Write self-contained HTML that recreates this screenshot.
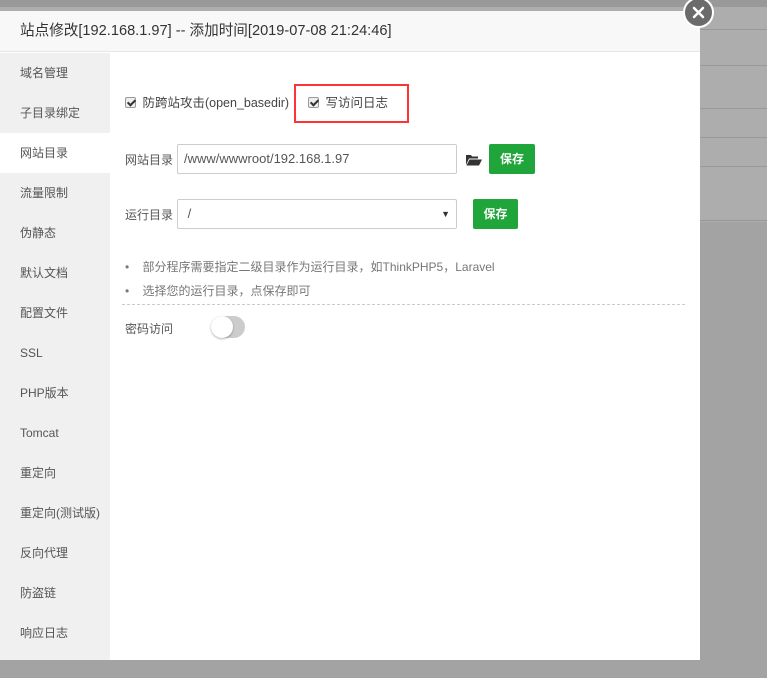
<!DOCTYPE html>
<html><head><meta charset="utf-8"><style>
*{margin:0;padding:0;box-sizing:border-box}
body{width:767px;height:678px;overflow:hidden;background:#a3a3a3;font-family:"Liberation Sans","Noto Sans CJK SC",sans-serif;font-size:12px;color:#555;position:relative}
.bg1{position:absolute;left:0;top:0;width:767px;height:7px;background:#999}
.bg2{position:absolute;left:0;top:7px;width:767px;height:215px;background:#adadad}
.ln{position:absolute;left:0;width:767px;height:1px;background:#999}
.dlg{position:absolute;left:0;top:11px;width:700px;height:649px;background:#fff}
.hd{height:41px;background:#f8f8f8;border-bottom:1px solid #e6e6e6;padding-left:20px;line-height:41px;font-size:14.6px;color:#333}
.side{position:absolute;left:0;top:42px;width:110px;height:607px;background:#f0f0f0}
.side div{height:40px;line-height:40px;padding-left:20px;color:#555;font-size:12px}
.side .on{background:#fff}
.close{position:absolute;left:683px;top:-14px;width:31px;height:31px;border-radius:50%;background:#6b6b6b;border:2px solid #fff}
.a{position:absolute}
.cb{display:inline-block;width:11px;height:11px;border:1px solid #999;background:#eee;border-radius:2px;vertical-align:-1px;position:relative;margin-right:3px}
.cb:after{content:"";position:absolute;left:3px;top:0px;width:3px;height:6px;border:solid #333;border-width:0 2px 2px 0;transform:rotate(45deg)}
.inp{position:absolute;height:30px;border:1px solid #ccc;border-radius:2px;padding-left:6px;line-height:28px;font-size:13px;color:#555;background:#fff}
.btn{position:absolute;height:30px;width:46px;background:#20a53a;color:#fff;border-radius:2px;text-align:center;line-height:30px;font-size:12px;font-weight:bold}
</style></head><body>
<div class="bg1"></div><div class="bg2"></div>
<div class="ln" style="top:29px"></div><div class="ln" style="top:65px"></div><div class="ln" style="top:108px"></div><div class="ln" style="top:137px"></div><div class="ln" style="top:166px"></div><div class="ln" style="top:220px;background:#979797"></div>
<div class="dlg">
<div class="hd">站点修改[192.168.1.97] -- 添加时间[2019-07-08 21:24:46]</div>
<div class="side">
<div>域名管理</div><div>子目录绑定</div><div class="on">网站目录</div><div>流量限制</div><div>伪静态</div><div>默认文档</div><div>配置文件</div><div>SSL</div><div>PHP版本</div><div>Tomcat</div><div>重定向</div><div>重定向(测试版)</div><div>反向代理</div><div>防盗链</div><div>响应日志</div>
</div>
<div class="a" style="left:125px;top:81px;color:#444;font-size:12.5px"><span class="cb"></span> 防跨站攻击(open_basedir)</div>
<div class="a" style="left:308px;top:81px;color:#444;font-size:12.5px"><span class="cb"></span> 写访问日志</div>
<div class="a" style="left:294px;top:73px;width:115px;height:39px;border:2px solid #f33"></div>
<div class="a" style="left:125px;top:140px;color:#555">网站目录</div>
<div class="inp" style="left:177px;top:133px;width:280px">/www/wwwroot/192.168.1.97</div>
<svg class="a" style="left:466px;top:143px" width="16" height="12" viewBox="0 0 16 12"><path d="M0 1h5l1 1.5h6v2H3L0 11z" fill="#333"/><path d="M3.5 5.5H16L13 11.5H0.5z" fill="#333"/></svg>
<div class="btn" style="left:489px;top:133px">保存</div>
<div class="a" style="left:125px;top:195px;color:#555">运行目录</div>
<div class="inp" style="left:177px;top:188px;width:280px">&nbsp;/<span style="position:absolute;right:6px;top:0;font-size:9px;color:#333">▼</span></div>
<div class="btn" style="left:473px;top:188px;width:45px">保存</div>
<div class="a" style="left:125px;top:244px;color:#777;line-height:24px">
<div>•&nbsp;&nbsp;&nbsp; 部分程序需要指定二级目录作为运行目录，如ThinkPHP5，Laravel</div>
<div>•&nbsp;&nbsp;&nbsp; 选择您的运行目录，点保存即可</div></div>
<div class="a" style="left:122px;top:293px;width:563px;border-top:1px dashed #ccc"></div>
<div class="a" style="left:125px;top:309px;color:#555">密码访问</div>
<div class="a" style="left:211px;top:305px;width:34px;height:22px;border-radius:11px;background:#ccc"><div style="position:absolute;left:0;top:0;width:22px;height:22px;border-radius:50%;background:#fff;box-shadow:0 1px 2px rgba(0,0,0,.3)"></div></div>
<div class="close"><svg width="27" height="27" viewBox="0 0 27 27"><path d="M9 9L18 18M18 9L9 18" stroke="#fff" stroke-width="2.5" stroke-linecap="round"/></svg></div>
</div>
</body></html>
